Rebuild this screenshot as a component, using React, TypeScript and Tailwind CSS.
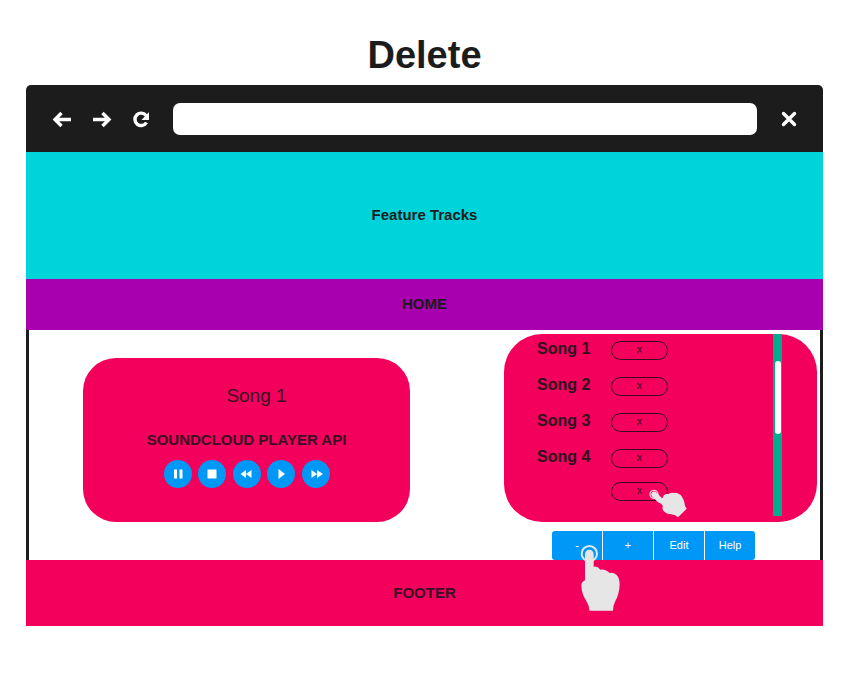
import type { ReactNode } from "react";

const songs = ["Song 1", "Song 2", "Song 3", "Song 4"];

function NavButton({ label, children }: { label: string; children: ReactNode }) {
  return (
    <button type="button" aria-label={label} className="flex size-6 items-center justify-center text-white">
      <svg viewBox="0 0 24 24" className="size-6" fill="none" stroke="currentColor" strokeWidth="3.4">
        {children}
      </svg>
    </button>
  );
}

function PlayerButton({ label, children }: { label: string; children: ReactNode }) {
  return (
    <button
      type="button"
      aria-label={label}
      className="flex size-7 items-center justify-center rounded-full bg-[#0098f7] text-white"
    >
      <svg viewBox="0 0 28 28" className="size-7" fill="currentColor">
        {children}
      </svg>
    </button>
  );
}

function RemoveButton({ label }: { label: string }) {
  return (
    <button
      type="button"
      aria-label={label}
      className="flex h-[19px] w-[57px] items-center justify-center rounded-full border border-[#3a0820] text-[10px] leading-none text-[#3a0820]"
    >
      x
    </button>
  );
}

function Player() {
  return (
    <section className="flex h-[164px] w-full max-w-[327px] flex-col items-center rounded-[33px] bg-[#f2005c] pt-[26px] text-[#3a1024]">
      <h2 className="pl-5 text-[19px] leading-6">Song 1</h2>
      <p className="mt-5 text-[15px] leading-6 font-bold">SOUNDCLOUD PLAYER API</p>
      <div className="mt-2 flex w-[166px] justify-between">
        <PlayerButton label="Pause">
          <path d="M10 9.500h3v9h-3zM15.500 9.500h3v9h-3z" />
        </PlayerButton>
        <PlayerButton label="Stop">
          <path d="M9.500 9.500h9v9h-9z" />
        </PlayerButton>
        <PlayerButton label="Rewind">
          <path d="M13 10v8L7.500 14zM18.500 10v8L13 14z" />
        </PlayerButton>
        <PlayerButton label="Play">
          <path d="M11.500 9v10L18 14z" />
        </PlayerButton>
        <PlayerButton label="Fast forward">
          <path d="M9.500 10v8L15 14zM15 10v8L21 14z" />
        </PlayerButton>
      </div>
    </section>
  );
}

function Playlist() {
  return (
    <section className="flex h-[188px] w-[313px] justify-between overflow-hidden rounded-[38px] bg-[#f2005c] pr-[35px] pl-[33px]">
      <ul className="relative -mt-0.5">
        {songs.map((song) => (
          <li key={song} className="flex h-9 items-center">
            <span className="w-[74px] pb-0.5 text-[16px] leading-6 font-bold text-[#2e1220]">{song}</span>
            <RemoveButton label={`Remove ${song}`} />
          </li>
        ))}
        <li className="flex h-[30px] items-center justify-end">
          <RemoveButton label="Remove track" />
        </li>
        <svg viewBox="445 178 120 90" className="pointer-events-none absolute top-[157px] left-[111px] h-[30px] w-10">
          <circle cx="463" cy="194" r="12" fill="none" stroke="#f8c8da" strokeWidth="4" />
          <path
            d="M456 199 Q452 188 461 186 Q467 185 472 190 L487 206 Q491 205 491 199 Q497 191 507 193 Q514 188 523 190 Q532 188 540 194 Q549 201 554 218 Q555 231 561 237 L535 263 Q528 255 515 254 Q498 252 491 243 Q486 236 490 229 Q486 222 475 218 Z"
            fill="#e6e6e6"
          />
        </svg>
      </ul>
      <div className="h-[182px] w-[9px] bg-[#00ad8c] px-[2px] pt-[27px]">
        <div className="h-[73px] w-[6px] rounded-full bg-white" />
      </div>
    </section>
  );
}

function Toolbar() {
  const button = "h-[29px] w-[50px] bg-[#0098f7] text-[11px] text-white";
  return (
    <div className="relative mt-[9px] mr-[62px] flex gap-px self-end">
      <button type="button" className={`${button} rounded-l-[3px]`}>-</button>
      <button type="button" className={button}>+</button>
      <button type="button" className={button}>Edit</button>
      <button type="button" className={`${button} rounded-r-[3px]`}>Help</button>
      <svg viewBox="120 72 123 204" className="pointer-events-none absolute top-[13px] left-7 z-10 h-[68px] w-[41px]">
        <circle cx="148" cy="101" r="23" fill="none" stroke="#e6e6e6" strokeWidth="6" />
        <path
          d="M135 181 V102 A13 13 0 0 1 161 102 V140 Q173 138 181 149 Q196 146 209 159 Q220 157 229 164 Q239 174 239 193 Q238 224 225 245 Q220 254 219 272 H148 Q148 257 139 243 Q125 222 124 198 Q123 186 135 181 Z"
          fill="#e6e6e6"
        />
      </svg>
    </div>
  );
}

export default function App() {
  return (
    <main className="min-h-screen bg-white pt-8 pr-7 pb-[52px] pl-[26px] font-['Liberation_Sans',Arial,sans-serif] text-[#1c1c1c]">
      <h1 className="pb-[7px] text-center text-[38px] leading-[46px] font-bold">Delete</h1>
      <div>
        <header className="flex h-[67px] items-center rounded-t-[5px] bg-[#1c1c1c] pr-[22px] pl-6">
          <nav className="flex gap-4">
            <NavButton label="Back">
              <path d="M21 12.500H5.500M11.500 6l-6.500 6.500 6.500 6.500" />
            </NavButton>
            <NavButton label="Forward">
              <path d="M3 12.500H18M12.500 6l6.500 6.500-6.500 6.500" />
            </NavButton>
            <NavButton label="Reload">
              <path d="M16 8.500A6.200 6.200 0 1 0 16.500 15.500" />
              <path d="M19 5v8h-7.500z" fill="currentColor" stroke="none" />
            </NavButton>
          </nav>
          <input
            type="text"
            aria-label="Address"
            className="ml-[19px] h-8 min-w-0 flex-1 rounded-[7px] bg-white px-3 text-[15px] outline-none"
          />
          <div className="ml-5 flex">
            <NavButton label="Close">
              <path d="M6.500 6.500l11 11M17.500 6.500l-11 11" strokeLinecap="round" />
            </NavButton>
          </div>
        </header>
        <section className="flex h-[127px] items-center justify-center bg-[#00d4db] text-[15px] font-bold">
          Feature Tracks
        </section>
        <div className="flex h-[51px] items-center justify-center bg-[#a800ae] text-[15px] font-bold">HOME</div>
        <div className="flex border-x-[3px] border-[#1c1c1c]">
          <div className="flex min-w-0 flex-1 justify-center pt-7">
            <Player />
          </div>
          <div className="flex shrink-0 flex-col pt-1 pr-[3px] pl-10">
            <Playlist />
            <Toolbar />
          </div>
        </div>
        <footer className="flex h-[66px] items-center justify-center bg-[#f2005c] text-[15px] font-bold text-[#3a1024]">
          FOOTER
        </footer>
      </div>
    </main>
  );
}
